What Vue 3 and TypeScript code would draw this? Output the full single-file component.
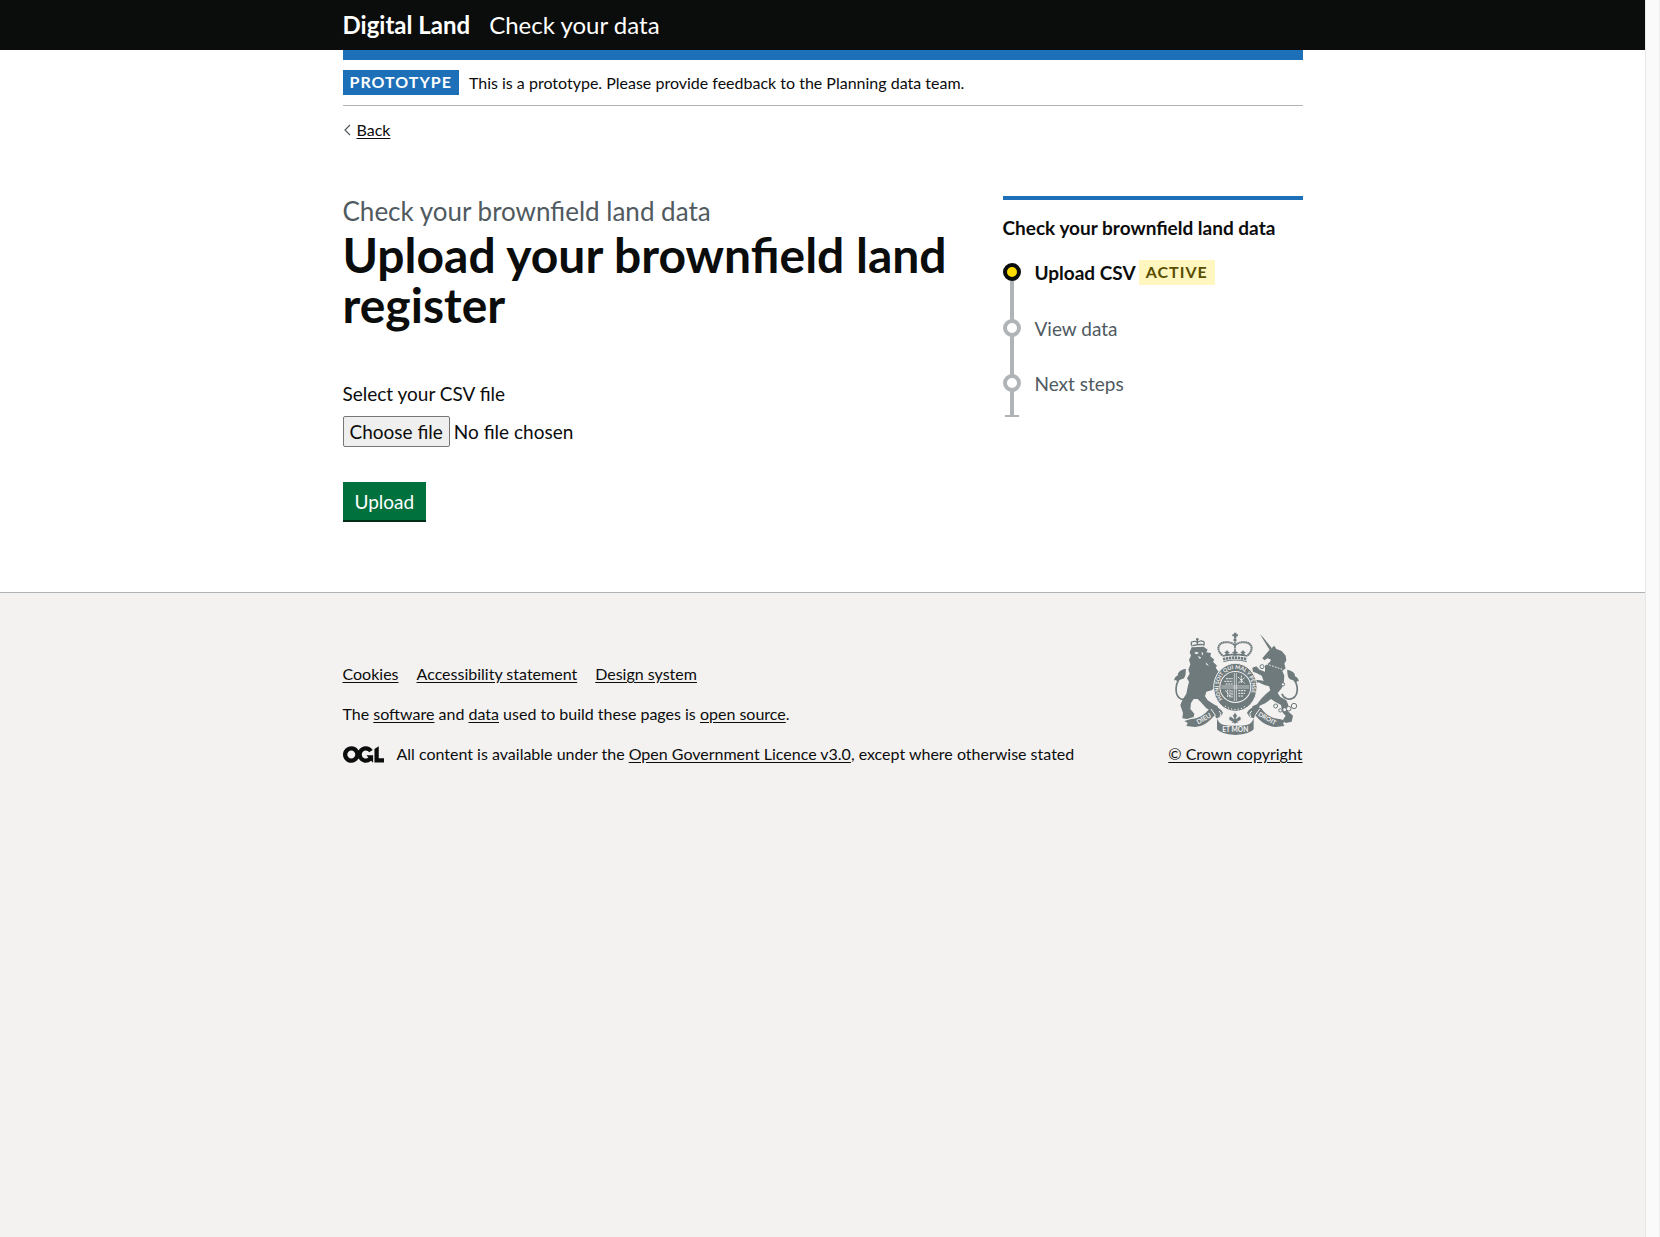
<script setup lang="ts">
import { ref } from 'vue'

interface Step {
  label: string
  active: boolean
}

const steps: Step[] = [
  { label: 'Upload CSV', active: true },
  { label: 'View data', active: false },
  { label: 'Next steps', active: false },
]

const footerLinks: string[] = ['Cookies', 'Accessibility statement', 'Design system']

const fileName = ref('No file chosen')

function onFileChange(event: Event): void {
  const input = event.target as HTMLInputElement
  fileName.value = input.files?.[0]?.name ?? 'No file chosen'
}
</script>

<template>
  <div class="window">
    <div class="page">
      <header class="header">
        <div class="container header-inner">
          <a class="header-logo" href="#">Digital Land</a>
          <a class="header-service" href="#">Check your data</a>
        </div>
      </header>

      <div class="container">
        <div class="phase-banner">
          <strong class="tag">Prototype</strong>
          <span>This is a prototype. Please provide feedback to the Planning data team.</span>
        </div>

        <a class="back-link" href="#">
          <svg width="9" height="12" viewBox="0 0 9 12" aria-hidden="true">
            <path d="M7 1 2 6l5 5" fill="none" stroke="#505a5f" stroke-width="1.2" />
          </svg>
          <span class="back-text">Back</span>
        </a>

        <main class="main">
          <div class="content">
            <span class="caption">Check your brownfield land data</span>
            <h1 class="title">Upload your brownfield land register</h1>

            <form class="form" @submit.prevent>
              <label class="label" for="csv">Select your CSV file</label>
              <div class="file-upload">
                <input id="csv" class="file-input" type="file" accept=".csv" @change="onFileChange" />
                <span class="file-button" aria-hidden="true">Choose file</span>
                <span aria-hidden="true">{{ fileName }}</span>
              </div>
              <button class="button" type="submit">Upload</button>
            </form>
          </div>

          <aside class="sidebar">
            <h2 class="sidebar-title">Check your brownfield land data</h2>
            <ol class="steps">
              <li v-for="step in steps" :key="step.label" class="step" :class="{ active: step.active }">
                <span class="marker" />
                <span class="step-label">{{ step.label }}</span>
                <strong v-if="step.active" class="tag tag-yellow">Active</strong>
              </li>
            </ol>
          </aside>
        </main>
      </div>

      <footer class="footer">
        <div class="container footer-inner">
          <div class="footer-meta">
            <ul class="footer-links">
              <li v-for="link in footerLinks" :key="link"><a href="#">{{ link }}</a></li>
            </ul>
            <p class="footer-line">
              The <a href="#">software</a> and <a href="#">data</a> used to build these pages is
              <a href="#">open source</a>.
            </p>
            <div class="licence">
              <svg class="ogl" width="41" height="17" viewBox="0 0 483.2 195.7" role="img" aria-label="OGL">
                <path
                  fill="currentColor"
                  d="M421.5 142.8V.1l-50.7 32.3v161.1h112.4v-50.7zm-122.3-9.6A47.12 47.12 0 0 1 221 97.8c0-26 21.1-47.1 47.1-47.1 16.7 0 31.4 8.7 39.7 21.8l42.7-27.2A97.63 97.63 0 0 0 268.1 0c-36.5 0-68.3 20.1-85.1 49.7A98 98 0 0 0 97.8 0C43.9 0 0 43.9 0 97.8s43.9 97.8 97.8 97.8c36.5 0 68.3-20.1 85.1-49.7a97.76 97.76 0 0 0 149.6 25.4l19.4 22.2h3v-87.8h-80l24.3 27.5zM97.8 145c-26 0-47.1-21.1-47.1-47.1s21.1-47.1 47.1-47.1 47.1 21.1 47.1 47.1S123.8 145 97.8 145"
                />
              </svg>
              <span>All content is available under the <a href="#">Open Government Licence v3.0</a>, except where otherwise stated</span>
            </div>
          </div>

          <a class="copyright" href="#">
            <svg class="crest" width="130" height="104" viewBox="12 21 390 312" aria-hidden="true">
              <defs>
                <path id="garter" d="M165 227A50 55 0 1 1 233 227" />
              </defs>
              <g fill="#6f7a7d">
                <!-- Crown -->
                <path d="M195 23h7v5h5v6h-5v6h-7v-6h-5v-6h5z" />
                <circle cx="198" cy="45" r="5" />
                <g fill="none" stroke="#6f7a7d">
                  <path d="M160 91C142 75 145 56 166 52c14-2 26 2 32 10 6-8 18-12 32-10 21 4 24 23 6 39" stroke-width="6" stroke-dasharray="5 1" />
                  <path d="M198 51v40" stroke-width="5" stroke-dasharray="4 1" />
                  <path d="M160 93q38-10 76 0" stroke-width="5" />
                  <path d="M162 103q36-10 72 0" stroke-width="8" stroke-dasharray="7 2" />
                  <path d="M163 110q35-10 70 0" stroke-width="3" />
                </g>
                <path d="m174 75 4 5 5 1-5 4 2 8h-12l2-8-5-4 5-1zM222 75l4 5 5 1-5 4 2 8h-12l2-8-5-4 5-1zM198 73l4 7 6 2-6 3 2 7h-12l2-7-6-3 6-2z" />

                <!-- Lion -->
                <g fill="none" stroke="#6f7a7d" stroke-width="4">
                  <path d="M70 64q-8-14 2-14 8-2 14 2 6-5 13-4 10 0 5 14" />
                  <path d="M85 41v20M72 62q16-5 32-3" />
                </g>
                <circle cx="85" cy="43" r="4" />
                <path d="m68 67 36-2 12 9-4 8 14 2-2 10 12 10-4 6 12 12-4 6 10 14-4 8 4 15-12 3 2 18-12 10-16 4-4 14 8 12 18 12 12 6 2 12-18 2-18-8-16-18-10-10H74l-8 12-2 18 12 14-2 10-20 6-14-2 2-16-8-24 6-14 12-20 4-20 4-16-6-10 8-14-4-12 6-16-4-14 6-12-4-10z" />
                <path d="M15 167c2-10 6-14 12-16-2-7 4-16 24-20-2 8 2 20-8 30-8 2-14 2-18 10-2-6-6-8-10-4z" />
                <path d="M32 160c-14 20-16 52 4 62 14 4 22-10 26-24" fill="none" stroke="#6f7a7d" stroke-width="5" />
                <path d="m80 80 9 3-4 5-9-3zM97 82l6 2-3 8zM86 93l10 4-3 6zM110 112l10 10-8-3z" fill="#f3f2f1" />

                <!-- Unicorn -->
                <path d="m273 28 9 9 26 32-6 6z" />
                <path d="m302 74 14-12 6 10 16 6 12 14 2 14-6 10 4 14-10 8 6 14-2 24-6 14-12 14 8 12 18 10 6 14-2 18 16 14-4 18-18 4-8-10 8-12-10-10-4-22-18-10-12-8-16 12-18 8-4 12-18-2v-8l14-6 12-16 14-14 14-12-4-12-14-4-18-8-10 4 4 8-12 2-6-14 12-8 18 2 10 2-6-16-16-8-10-4-2-12 12-4 10 10 16 6v-18l14-10 4-8-10-4-10 6-6-6 10-12z" />
                <path d="M390 170c-2-10-6-14-12-16 0-9-4-16-24-20 2 8 0 20 8 28 8 4 14 2 20 12 2-6 4-7 8-4z" />
                <path d="M373 162c16 18 16 48-2 58-12 6-28 0-32-14" fill="none" stroke="#6f7a7d" stroke-width="5" />
                <path d="m292 117 48 16" stroke="#f3f2f1" stroke-width="3" stroke-dasharray="5 4" />
                <g fill="#f3f2f1" stroke="#6f7a7d" stroke-width="3">
                  <circle cx="320" cy="243" r="6" />
                  <circle cx="334" cy="256" r="5" />
                  <circle cx="347" cy="254" r="6" />
                  <circle cx="359" cy="251" r="7" />
                  <circle cx="375" cy="243" r="8" />
                  <circle cx="342" cy="178" r="5" />
                  <circle cx="279" cy="125" r="6" />
                </g>

                <!-- Garter and shield -->
                <ellipse cx="199" cy="187" rx="65" ry="72" stroke="#f3f2f1" stroke-width="3" />
                <text class="motto" font-size="16" fill="#f3f2f1"><textPath href="#garter" startOffset="6">HONI SOIT QUI MAL Y PENSE</textPath></text>
                <circle cx="199" cy="186" r="48" fill="#f3f2f1" />
                <circle cx="199" cy="186" r="45" />
                <g fill="none" stroke="#f3f2f1" stroke-width="3">
                  <path d="M196 144v84M202 144v84M157 183h84M157 189h84" stroke-width="2" />
                  <path d="M171 161h20M166 169h25M170 177h21M207 156l20 19M227 158l-20 17M217 152v24M169 196l16 20M176 194v22M183 194v26M189 196v24M208 197h22M208 205h20M208 213h16" stroke-dasharray="6 2" />
                  <path d="m168 243 14 8 17 3 17-3 14-8" stroke-dasharray="4 6" />
                </g>

                <!-- Ribbon -->
                <path d="m46 288 20-6c20 0 42-12 56-33l18-3q16 4 22 18l-8 12-12 4-5-9c-18 22-36 34-59 35l-26-3 4-9z" />
                <path d="m352 288-20-6c-20 0-42-12-56-33l-20-3q-16 4-22 18l8 12 12 4 5-9c18 22 38 34 61 35l26-3-4-9z" />
                <path d="M144 279q4 16 18 20 37 7 74 0 14-4 18-20v34q-10 14-55 17-45-3-55-17z" />
                <path d="M150 258q10 6 3 18M248 258q-10 6-3 18M126 252l14 20M272 252l-14 20" fill="none" stroke="#f3f2f1" stroke-width="3" />
                <g class="motto" fill="#f3f2f1" text-anchor="middle" font-size="20">
                  <text x="104" y="288" transform="rotate(-30 104 280)">DIEU</text>
                  <text x="199" y="322">ET MON</text>
                  <text x="295" y="287" font-size="19" transform="rotate(30 295 280)">DROIT</text>
                </g>

                <!-- Flower beneath the shield -->
                <path d="m198 262 7 10-4 9 10-7q9 4 4 12l-9 4 4 4h-8l-4 4-4-4h-8l4-4-9-4q-5-8 4-12l10 7-4-9z" stroke="#f3f2f1" stroke-width="2" />
              </g>
            </svg>
            <span class="copyright-text">© Crown copyright</span>
          </a>
        </div>
      </footer>
    </div>
    <div class="scroll-track" aria-hidden="true" />
  </div>
</template>

<style>
body {
  margin: 0;
  background: #f3f2f1;
}
</style>

<style scoped>
.window {
  display: flex;
  min-height: 100vh;
  font-family: Lato, Roboto, sans-serif;
  font-size: 16px;
  line-height: 20px;
  color: #0b0c0c;
}

.page {
  flex: 1;
  min-width: 0;
  display: flex;
  flex-direction: column;
  background: #fff;
}

.scroll-track {
  width: 15px;
  box-sizing: border-box;
  background: #fafafa;
  border-left: 1px solid #e7e7e7;
  border-right: 1px solid #ededed;
}

.container {
  width: calc(100% - 60px);
  max-width: 960px;
  margin: 0 auto;
}

a {
  color: inherit;
  text-underline-offset: 2px;
}

.header {
  background: #0b0c0c;
  color: #fff;
}

.header-inner {
  display: flex;
  align-items: center;
  gap: 19px;
  height: 50px;
  font-size: 24px;
  line-height: 30px;
}

.header-inner a {
  text-decoration: none;
}

.header-logo {
  font-weight: 700;
}

.phase-banner {
  display: flex;
  align-items: center;
  gap: 10px;
  padding: 10px 0;
  border-top: 10px solid #1d70b8;
  border-bottom: 1px solid #b1b4b6;
}

.tag {
  padding: 2px 7px 3px;
  font-size: 16px;
  line-height: 20px;
  font-weight: 700;
  letter-spacing: 1px;
  text-transform: uppercase;
  color: #fff;
  background: #1d70b8;
}

.tag-yellow {
  color: #594d00;
  background: #fff7bf;
}

.back-link {
  display: inline-flex;
  align-items: center;
  gap: 5px;
  margin-top: 14px;
  text-decoration: none;
}

.back-text {
  text-decoration: underline;
  text-underline-offset: 2px;
}

.main {
  display: flex;
  justify-content: space-between;
  gap: 30px;
  padding: 56px 0 72px;
}

.content {
  flex: 0 1 630px;
}

.caption {
  display: block;
  font-size: 26px;
  line-height: 30px;
  color: #505a5f;
}

.title {
  margin: 4px 0 51px;
  font-size: 48px;
  line-height: 50px;
  font-weight: 700;
}

.form {
  display: flex;
  flex-direction: column;
  align-items: flex-start;
  font-size: 19px;
  line-height: 25px;
}

.file-upload {
  position: relative;
  display: flex;
  align-items: center;
  gap: 4px;
  margin: 10px 0 35px;
}

.file-input {
  position: absolute;
  inset: 0;
  width: 100%;
  opacity: 0;
}

.file-button {
  padding: 2px 6px;
  border: 1px solid #767676;
  border-radius: 2px;
  background: #efefef;
}

.button {
  padding: 7px 12px 6px;
  border: 0;
  font: inherit;
  color: #fff;
  background: #00703c;
  box-shadow: 0 2px 0 #002d18;
}

.sidebar {
  flex: 0 0 300px;
  box-sizing: border-box;
  border-top: 4px solid #1d70b8;
  align-self: flex-start;
}

.sidebar-title {
  margin: 15px 0 20px;
  font-size: 19px;
  line-height: 25px;
  font-weight: 700;
}

.steps {
  margin: 0;
  padding: 0;
  list-style: none;
}

.step {
  position: relative;
  display: flex;
  align-items: flex-start;
  gap: 3px;
  min-height: 55px;
  font-size: 19px;
  line-height: 25px;
  color: #505a5f;
}

.step::before {
  content: '';
  position: absolute;
  left: 7px;
  top: 12px;
  bottom: -12px;
  width: 4px;
  background: #b1b4b6;
}

.step:last-child::before {
  bottom: 0;
}

.step:last-child {
  min-height: 46px;
}

.step:last-child::after {
  content: '';
  position: absolute;
  left: 2px;
  bottom: 0;
  width: 14px;
  height: 2px;
  background: #b1b4b6;
}

.marker {
  position: relative;
  flex: none;
  box-sizing: border-box;
  width: 18px;
  height: 18px;
  margin: 3px 11px 0 0;
  border: 4px solid #b1b4b6;
  border-radius: 50%;
  background: #fff;
}

.active {
  min-height: 56px;
  font-weight: 700;
  color: #0b0c0c;
}

.active .marker {
  border-color: #0b0c0c;
  background: #fd0;
}

.footer {
  flex: 1;
  padding: 39px 0 40px;
  border-top: 1px solid #b1b4b6;
  background: #f3f2f1;
}

.footer-inner {
  display: flex;
  justify-content: space-between;
  align-items: flex-end;
}

.footer-meta {
  display: flex;
  flex-direction: column;
  gap: 20px;
}

.footer-links {
  display: flex;
  gap: 18px;
  margin: 0;
  padding: 0;
  list-style: none;
}

.footer-line {
  margin: 0;
}

.licence {
  display: flex;
  align-items: center;
  gap: 13px;
}

.ogl {
  flex: none;
}

.copyright {
  display: flex;
  flex-direction: column;
  align-items: flex-end;
  gap: 8px;
  text-decoration: none;
}

.copyright-text {
  text-decoration: underline;
  text-underline-offset: 2px;
}

.motto {
  font-family: Lato, sans-serif;
  font-weight: 700;
}
</style>
